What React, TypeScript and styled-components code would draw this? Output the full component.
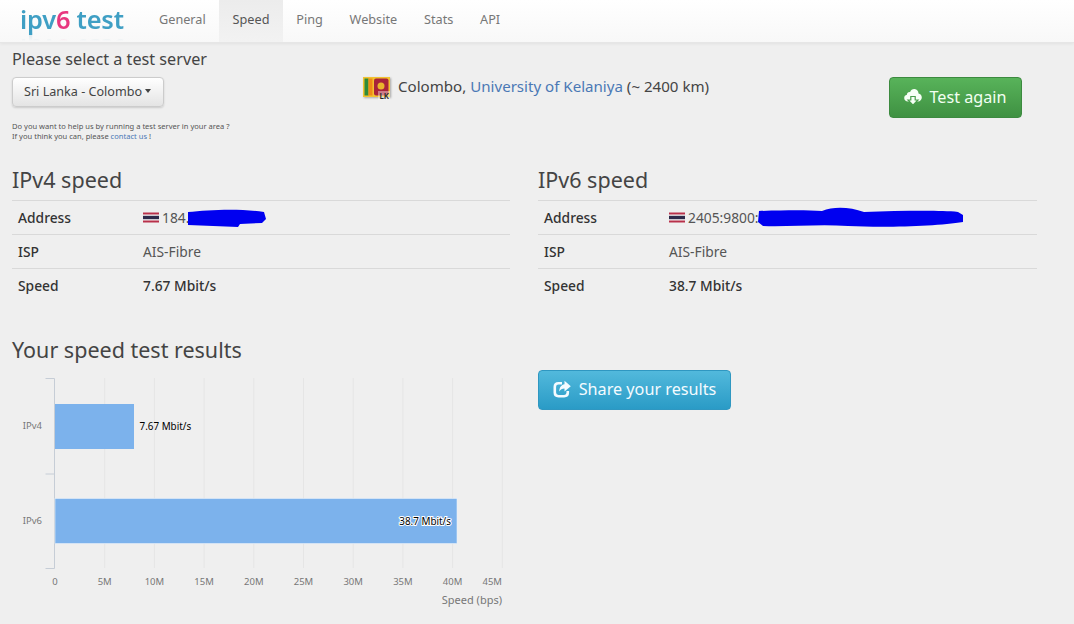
import React from 'react';
import styled, { createGlobalStyle } from 'styled-components';

const GlobalStyle = createGlobalStyle`
  html, body {
    margin: 0;
    padding: 0;
    background: #efefef;
    color: #444;
    font-family: 'Noto Sans', 'Open Sans', sans-serif;
    font-size: 14px;
  }
  * {
    box-sizing: border-box;
  }
`;

const navItems = ['General', 'Speed', 'Ping', 'Website', 'Stats', 'API'];
const ticks = [0, 5, 10, 15, 20, 25, 30, 35, 40, 45];
const tickX = (i: number) => 55 + i * 49.7;

const ThaiFlag = () => (
  <FlagSvg width="16" height="11" viewBox="0 0 16 11">
    <rect y="0.500" width="16" height="10" fill="#f4f4f4" />
    <rect y="0.500" width="16" height="2" fill="#b8304a" />
    <rect y="3.800" width="16" height="3.400" fill="#2d2a4a" />
    <rect y="8.500" width="16" height="2" fill="#b8304a" />
  </FlagSvg>
);

const CloudIcon = () => (
  <svg width="18" height="18" viewBox="0 0 18 18">
    <path
      d="M4 13.500C1.800 13.500 0.200 12 0.200 10C0.200 8.300 1.300 7 2.900 6.700C3 4.900 4.500 3.800 6 4.200C6.900 2 8.700 0.800 10.700 1.100C12.900 1.400 14.500 3.200 14.500 5.500C16.400 5.800 17.800 7.500 17.800 9.500C17.800 11.800 16 13.500 14 13.500Z"
      fill="#f6fff6"
    />
    <path d="M6.800 8.500H11.200V12H14L9 17.200L4 12H6.800Z" fill="#f6fff6" stroke="#4a9f4d" strokeWidth="1.200" />
  </svg>
);

const ShareIcon = () => (
  <svg width="18" height="18" viewBox="0 0 18 18">
    <path
      d="M9 3.200H5.500C3.300 3.200 1.800 4.700 1.800 6.800V12.600C1.800 14.700 3.300 16.200 5.500 16.200H11.200C13.300 16.200 14.800 14.700 14.800 12.600V11"
      fill="none"
      stroke="#f4fbff"
      strokeWidth="2.600"
    />
    <path d="M11.500 0.800L17.800 6.300L11.500 11.500V8.500C9 8.500 7.400 9.400 6.300 11.500C6.300 7.600 8.300 4.800 11.500 4.300Z" fill="#f4fbff" />
  </svg>
);

const SpeedTable = ({ title, children, isp, speed }: { title: string; children: React.ReactNode; isp: string; speed: string }) => (
  <div>
    <SectionTitle>{title}</SectionTitle>
    <Row>
      <RowLabel>Address</RowLabel>
      <AddressValue>{children}</AddressValue>
    </Row>
    <Row>
      <RowLabel>ISP</RowLabel>
      <RowValue>{isp}</RowValue>
    </Row>
    <Row>
      <RowLabel>Speed</RowLabel>
      <RowValue $strong>{speed}</RowValue>
    </Row>
  </div>
);

const Chart = () => (
  <ChartSvg width="498" height="254" viewBox="12 372 498 254">
    {ticks.slice(1).map((t, i) => (
      <line key={t} x1={tickX(i + 1)} x2={tickX(i + 1)} y1="378" y2="568" stroke="#e5e5e5" />
    ))}
    <path d="M45.500 378.500H54.500V568.500H45.500M45.500 474H54.500" fill="none" stroke="#c6cdd6" />
    <rect x="55" y="404" width="79" height="45" fill="#7cb2ec" />
    <rect x="55" y="498.500" width="402" height="45" fill="#7cb2ec" stroke="#e8f1fb" strokeWidth="0.6" />
    <AxisText x="42" y="429" textAnchor="end">IPv4</AxisText>
    <AxisText x="42" y="524" textAnchor="end">IPv6</AxisText>
    {ticks.map((t, i) => (
      <AxisText key={t} x={t === 45 ? 502 : tickX(i)} y="585" textAnchor={t === 45 ? 'end' : 'middle'}>
        {t === 0 ? '0' : `${t}M`}
      </AxisText>
    ))}
    <AxisTitle x="502" y="604" textAnchor="end">Speed (bps)</AxisTitle>
    <BarText x="139.500" y="430">7.67 Mbit/s</BarText>
    <BarText x="451" y="525" textAnchor="end" $halo>38.7 Mbit/s</BarText>
  </ChartSvg>
);

const App = () => (
  <>
    <GlobalStyle />
    <Navbar>
      <Brand>
        ipv<Six>6</Six> test
      </Brand>
      <NavList>
        {navItems.map((item) => (
          <NavItem key={item} $active={item === 'Speed'}>
            {item}
          </NavItem>
        ))}
      </NavList>
    </Navbar>
    <Page>
      <ServerRow>
        <div>
          <ServerTitle>Please select a test server</ServerTitle>
          <Dropdown>
            Sri Lanka - Colombo
            <Caret />
          </Dropdown>
          <HelpNote>
            Do you want to help us by running a test server in your area ?
            <br />
            If you think you can, please <NoteLink>contact us</NoteLink> !
          </HelpNote>
        </div>
        <ServerInfo>
          <FlagBadge>
            <svg width="27" height="20" viewBox="0 0 27 20">
              <rect width="27" height="20" fill="#f2c230" />
              <rect x="1.500" y="1.500" width="4" height="17" fill="#2e8b3a" />
              <rect x="5.500" y="1.500" width="4" height="17" fill="#ef8a17" />
              <rect x="11" y="1.500" width="14.500" height="17" rx="2" fill="#a8233a" />
              <circle cx="18" cy="9" r="3.500" fill="#e9b52c" />
            </svg>
            <FlagCode>LK</FlagCode>
          </FlagBadge>
          <span>
            Colombo, <InfoLink>University of Kelaniya</InfoLink> (~ 2400 km)
          </span>
        </ServerInfo>
        <TestButton>
          <CloudIcon />
          Test again
        </TestButton>
      </ServerRow>

      <Columns>
        <SpeedTable title="IPv4 speed" isp="AIS-Fibre" speed="7.67 Mbit/s">
          <ThaiFlag />
          184.
          <Redaction width="78" height="18" viewBox="0 0 78 18">
            <path d="M0 3 C20 1 50 -1 76 3 L78 10 L74 14 L52 15 L50 18 L0 16 Z" fill="#0000f0" />
          </Redaction>
        </SpeedTable>
        <SpeedTable title="IPv6 speed" isp="AIS-Fibre" speed="38.7 Mbit/s">
          <ThaiFlag />
          2405:9800:
          <Redaction width="206" height="21" viewBox="0 0 206 21">
            <path d="M1 4 C30 3 50 3 64 4 C76 -1 92 0 106 5 C140 4 180 3 200 5 L205 8 L205 15 C180 19 130 21 90 19 C60 17 30 20 5 19 L0 15 Z" fill="#0000f0" />
          </Redaction>
        </SpeedTable>
      </Columns>

      <Columns>
        <ResultsBlock>
          <SectionTitle>Your speed test results</SectionTitle>
          <Chart />
        </ResultsBlock>
        <ShareCell>
          <ShareButton>
            <ShareIcon />
            Share your results
          </ShareButton>
        </ShareCell>
      </Columns>
    </Page>
  </>
);

export default App;

const Navbar = styled.header`
  display: flex;
  height: 43px;
  padding-left: 20px;
  background: linear-gradient(to bottom, #ffffff 0%, #f8f8f8 100%);
  border-bottom: 1px solid #e6e6e6;
  box-shadow: 0 1px 3px rgba(0, 0, 0, 0.06);
`;

const Brand = styled.div`
  width: 125.6px;
  height: 34px;
  margin-top: 3px;
  color: #3f9fc4;
  font-family: 'Noto Sans', sans-serif;
  font-size: 25.4px;
  font-weight: 600;
  line-height: 32px;
  letter-spacing: -0.2px;
  white-space: nowrap;
  -webkit-box-reflect: below -6px linear-gradient(transparent 70%, rgba(0, 0, 0, 0.25));
`;

const Six = styled.span`
  color: #e8377f;
`;

const NavList = styled.nav`
  display: flex;
`;

const NavItem = styled.a<{ $active?: boolean }>`
  display: block;
  height: 42px;
  padding: 0 13.4px;
  color: ${(p) => (p.$active ? '#555' : '#777')};
  background: ${(p) => (p.$active ? 'linear-gradient(to bottom, #ececec, #f2f2f2)' : 'transparent')};
  font-size: 12.7px;
  line-height: 39px;
`;

const Page = styled.main`
  padding: 5px 37px 0 12px;
`;

const ServerRow = styled.section`
  display: grid;
  grid-template-columns: 351px 526px 133px;
  height: 118px;
`;

const ServerTitle = styled.h4`
  margin: 0;
  color: #444;
  font-size: 16.2px;
  font-weight: 400;
  line-height: 22px;
`;

const Dropdown = styled.button`
  display: flex;
  align-items: center;
  width: 152px;
  height: 30px;
  margin-top: 7px;
  padding: 0 11px 2px;
  color: #444;
  background: linear-gradient(to bottom, #ffffff, #e4e4e4);
  border: 1px solid #ccc;
  border-radius: 4px;
  box-shadow: 0 1px 2px rgba(0, 0, 0, 0.15);
  font-family: inherit;
  font-size: 12.6px;
  white-space: nowrap;
`;

const Caret = styled.span`
  margin-left: 3px;
  border-top: 4px solid #444;
  border-left: 3px solid transparent;
  border-right: 3px solid transparent;
`;

const HelpNote = styled.p`
  margin: 14px 0 0;
  color: #555;
  font-size: 7.55px;
  line-height: 10px;
`;

const NoteLink = styled.a`
  color: #4a78b5;
`;

const ServerInfo = styled.div`
  display: flex;
  align-items: flex-start;
  gap: 8px;
  padding-top: 28px;
  color: #444;
  font-size: 15.1px;
  line-height: 21px;
`;

const FlagBadge = styled.span`
  position: relative;
  display: block;
  width: 27px;
  height: 20px;
  margin-top: 1px;
  box-shadow: 1px 1px 2px rgba(0, 0, 0, 0.3);
`;

const FlagCode = styled.span`
  position: absolute;
  right: 0;
  bottom: -3px;
  padding: 0 1px;
  color: #222;
  background: rgba(255, 255, 255, 0.4);
  font-size: 8px;
  font-weight: 600;
  line-height: 9px;
`;

const InfoLink = styled.a`
  color: #4a78b5;
`;

const TestButton = styled.button`
  display: flex;
  align-items: center;
  justify-content: center;
  gap: 7px;
  width: 133px;
  height: 41px;
  margin-top: 29px;
  padding: 0 0 2px;
  color: #f2fff2;
  background: linear-gradient(to bottom, #58b35a, #3f9142);
  border: 1px solid #3c8a3f;
  border-radius: 4px;
  font-family: inherit;
  font-size: 16.2px;
`;

const Columns = styled.section`
  display: grid;
  grid-template-columns: 498px 499px;
  column-gap: 28px;
`;

const SectionTitle = styled.h3`
  margin: 0;
  color: #444;
  font-size: 21.5px;
  font-weight: 400;
  line-height: 28px;
  height: 34px;
`;

const Row = styled.div`
  display: flex;
  align-items: center;
  height: 34px;
  padding-left: 6px;
  border-top: 1px solid #d9d9d9;
`;

const RowLabel = styled.span`
  width: 125px;
  color: #333;
  font-size: 13.8px;
  font-weight: 500;
`;

const RowValue = styled.span<{ $strong?: boolean }>`
  color: ${(p) => (p.$strong ? '#333' : '#555')};
  font-size: 13.8px;
  font-weight: ${(p) => (p.$strong ? 500 : 400)};
`;

const AddressValue = styled(RowValue)`
  display: flex;
  align-items: center;
`;

const FlagSvg = styled.svg`
  margin-right: 3px;
`;

const Redaction = styled.svg`
  display: block;
  margin-left: -1px;
`;

const ResultsBlock = styled.div`
  margin-top: 34px;
`;

const ChartSvg = styled.svg`
  display: block;
  margin-top: 2px;
`;

const AxisText = styled.text`
  fill: #777;
  font-size: 9.5px;
`;

const AxisTitle = styled.text`
  fill: #777;
  font-size: 11px;
`;

const BarText = styled.text<{ $halo?: boolean }>`
  fill: #000;
  font-size: 9.9px;
  stroke: ${(p) => (p.$halo ? '#fff' : 'none')};
  stroke-width: ${(p) => (p.$halo ? '2px' : '0')};
  paint-order: stroke;
`;

const ShareCell = styled.div`
  padding-top: 68px;
`;

const ShareButton = styled.button`
  display: flex;
  align-items: center;
  justify-content: center;
  gap: 8px;
  width: 193px;
  height: 40px;
  padding: 0 0 2px;
  color: #f4fbff;
  background: linear-gradient(to bottom, #52b9dc, #2a9bc6);
  border: 1px solid #2f97c1;
  border-radius: 4px;
  font-family: inherit;
  font-size: 16.2px;
`;
